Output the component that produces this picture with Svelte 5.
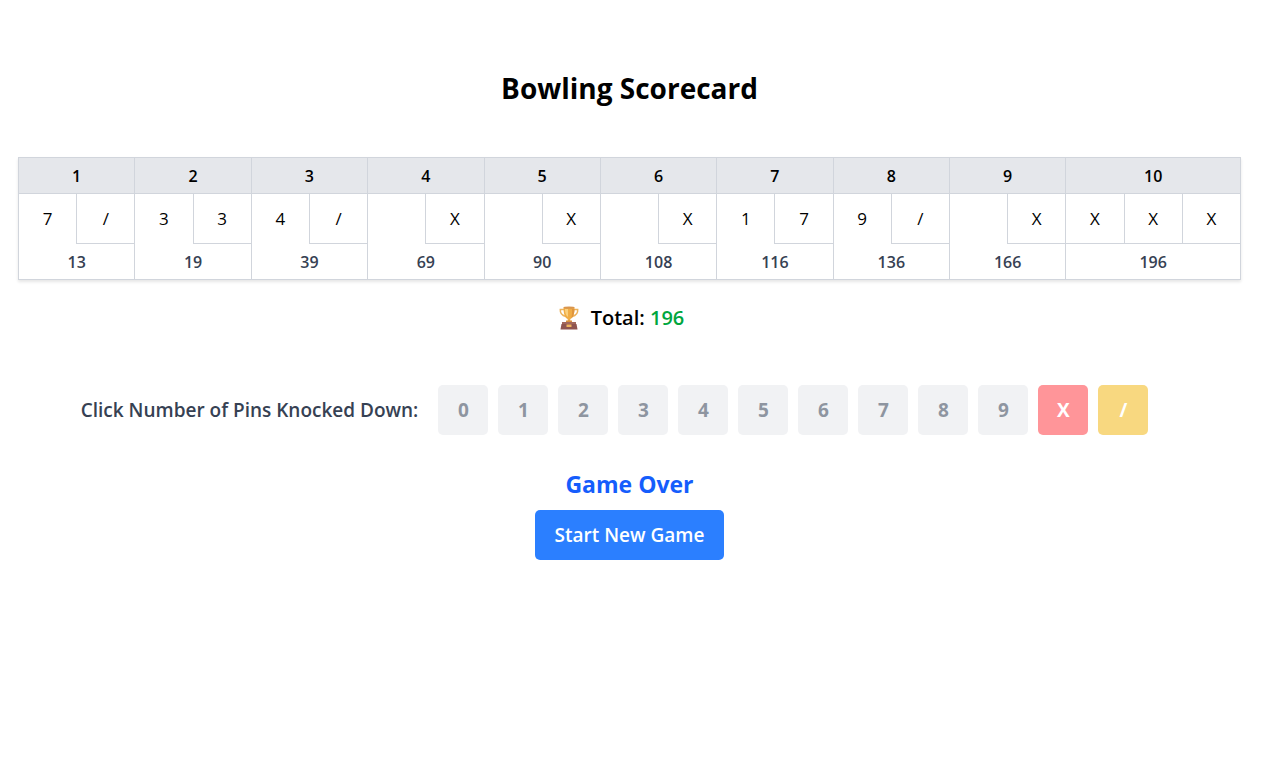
<script>
  const frames = [
    { rolls: ['7', '/'], score: 13 },
    { rolls: ['3', '3'], score: 19 },
    { rolls: ['4', '/'], score: 39 },
    { rolls: ['', 'X'], score: 69 },
    { rolls: ['', 'X'], score: 90 },
    { rolls: ['', 'X'], score: 108 },
    { rolls: ['1', '7'], score: 116 },
    { rolls: ['9', '/'], score: 136 },
    { rolls: ['', 'X'], score: 166 },
    { rolls: ['X', 'X', 'X'], score: 196 }
  ];
  const rolls = frames.flatMap((frame, f) =>
    frame.rolls.map((mark, i) => ({ mark, boxed: i > 0 || f === 9, first: i === 0 }))
  );
  const total = frames[frames.length - 1].score;
  const pins = ['0', '1', '2', '3', '4', '5', '6', '7', '8', '9'];
</script>

<main>
  <h1>Bowling Scorecard</h1>

  <table>
    <colgroup>
      {#each rolls as _}<col />{/each}
    </colgroup>
    <thead>
      <tr>
        {#each frames as frame, i}
          <th scope="col" colspan={frame.rolls.length}>{i + 1}</th>
        {/each}
      </tr>
    </thead>
    <tbody>
      <tr class="rolls">
        {#each rolls as roll}
          <td class:boxed={roll.boxed} class:first={roll.first}>{roll.mark}</td>
        {/each}
      </tr>
      <tr class="scores">
        {#each frames as frame}
          <td colspan={frame.rolls.length}>{frame.score}</td>
        {/each}
      </tr>
    </tbody>
  </table>

  <p class="total">
    <svg width="20" height="24" viewBox="0 0 20 24" aria-hidden="true">
      <path d="M5 3.500H1.300C1 7 3 9.500 7 10.500M15 3.500h3.700C19 7 17 9.500 13 10.500" fill="none" stroke="#ecb25c" stroke-width="1.500" />
      <path d="M4.500 1.500h11C15.500 8 14 12 11.300 13v2.500h-2.600V13C6 12 4.500 8 4.500 1.500z" fill="#f0ac45" />
      <path d="M6 3h3v8C7 9.500 6 7 6 3z" fill="#fbd07c" />
      <path d="M13 3h2.500c0 4-1 7.500-3 9.300C13 9 13.200 6 13 3z" fill="#e0953d" />
      <ellipse cx="10" cy="1.700" rx="5.500" ry="1.100" fill="#d9954e" />
      <path d="M7 14.500h6V16H7z" fill="#d98f3b" />
      <path d="M3 16h14v2H3z" fill="#a3685c" />
      <path d="M2.500 18h15l1 5.500h-17z" fill="#8f5550" />
      <path d="M7.500 18.500h5V21h-5z" fill="#f0b55d" />
    </svg>
    <span>Total: <strong>{total}</strong></span>
  </p>

  <div class="controls">
    <span class="prompt" id="pins-label">Click Number of Pins Knocked Down:</span>
    <div class="pins" role="group" aria-labelledby="pins-label">
      {#each pins as pin}
        <button type="button" disabled>{pin}</button>
      {/each}
      <button type="button" class="strike" disabled>X</button>
      <button type="button" class="spare" disabled>/</button>
    </div>
  </div>

  <section class="over">
    <h2>Game Over</h2>
    <button type="button">Start New Game</button>
  </section>
</main>

<style>
  :global(body) {
    background: #fff;
  }
  main {
    box-sizing: border-box;
    padding: 64px 24px 40px 18px;
    font-family: 'Segoe UI', 'Open Sans', 'Noto Sans', sans-serif;
    font-size: 17px;
    color: #000;
    text-align: center;
  }
  h1 {
    margin: 0 0 45px;
    font-size: 28px;
    line-height: 48px;
    font-weight: 700;
  }
  table {
    width: 100%;
    table-layout: fixed;
    border-collapse: collapse;
    border: 1px solid #d1d5dc;
    box-shadow: 0 2px 3px rgba(0, 0, 0, 0.1);
  }
  th,
  td {
    padding: 0;
  }
  th {
    height: 35px;
    background: #e5e7eb;
    border: 1px solid #d1d5dc;
    font-size: 16px;
    font-weight: 600;
  }
  .rolls td {
    height: 49px;
  }
  .rolls .first {
    border-left: 1px solid #d1d5dc;
  }
  .rolls .boxed {
    border-left: 1px solid #d1d5dc;
    border-bottom: 1px solid #d1d5dc;
  }
  .scores td {
    height: 35px;
    border-left: 1px solid #d1d5dc;
    font-size: 16px;
    font-weight: 600;
    color: #364153;
  }
  .total {
    display: flex;
    align-items: center;
    justify-content: center;
    gap: 12px;
    margin: 22px 16px 0 0;
    font-size: 20px;
    line-height: 32px;
    font-weight: 600;
  }
  .total strong {
    font-weight: 600;
    color: #00a63e;
  }
  .controls {
    display: flex;
    align-items: center;
    justify-content: center;
    gap: 20px;
    margin: 51px 30px 0 0;
  }
  .prompt {
    font-size: 19px;
    font-weight: 600;
    color: #364153;
    white-space: nowrap;
  }
  .pins {
    display: flex;
    gap: 10px;
  }
  button {
    height: 50px;
    padding: 0;
    border: 0;
    border-radius: 5px;
    font-family: inherit;
    font-size: 19px;
    color: #fff;
  }
  .pins button {
    width: 50px;
    font-weight: 700;
    background: #f1f2f4;
    color: #8e95a0;
  }
  .pins .strike {
    background: #ff9599;
    color: #fff;
  }
  .pins .spare {
    background: #f8d880;
    color: #fff;
  }
  .over {
    display: flex;
    flex-direction: column;
    align-items: center;
    margin-top: 32px;
  }
  h2 {
    margin: 0 0 8px;
    font-size: 23px;
    line-height: 35px;
    font-weight: 700;
    color: #155dfc;
  }
  .over button {
    padding: 0 20px;
    background: #2b7fff;
    font-weight: 600;
    cursor: pointer;
  }
</style>
